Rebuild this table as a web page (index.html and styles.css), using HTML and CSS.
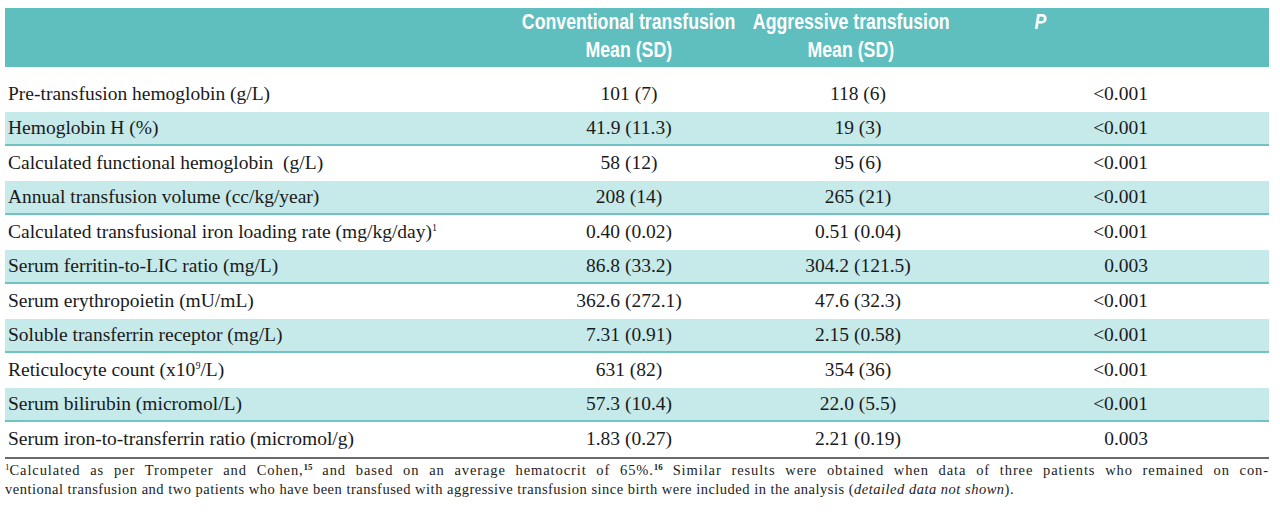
FILE: index.html
```html
<!DOCTYPE html>
<html lang="en">
<head>
<meta charset="utf-8">
<title>Table</title>
<link rel="stylesheet" href="styles.css">
</head>
<body>
<div class="page">
  <div class="head">
    <div class="hcell"></div>
    <div class="hcell"><span class="nar">Conventional transfusion</span><span class="nar">Mean (SD)</span></div>
    <div class="hcell c2"><span class="nar">Aggressive transfusion</span><span class="nar">Mean (SD)</span></div>
    <div class="hcell p"><i class="nar">P</i></div>
  </div>
  <div class="body">
    <div class="row first"><div class="lab">Pre-transfusion hemoglobin (g/L)</div><div class="v">101 (7)</div><div class="v">118 (6)</div><div class="pv">&lt;0.001</div></div>
    <div class="row alt"><div class="lab">Hemoglobin H (%)</div><div class="v">41.9 (11.3)</div><div class="v">19 (3)</div><div class="pv">&lt;0.001</div></div>
    <div class="row"><div class="lab">Calculated functional hemoglobin&nbsp; (g/L)</div><div class="v">58 (12)</div><div class="v">95 (6)</div><div class="pv">&lt;0.001</div></div>
    <div class="row alt"><div class="lab">Annual transfusion volume (cc/kg/year)</div><div class="v">208 (14)</div><div class="v">265 (21)</div><div class="pv">&lt;0.001</div></div>
    <div class="row"><div class="lab">Calculated transfusional iron loading rate (mg/kg/day)<sup>1</sup></div><div class="v">0.40 (0.02)</div><div class="v">0.51 (0.04)</div><div class="pv">&lt;0.001</div></div>
    <div class="row alt"><div class="lab">Serum ferritin-to-LIC ratio (mg/L)</div><div class="v">86.8 (33.2)</div><div class="v">304.2 (121.5)</div><div class="pv">0.003</div></div>
    <div class="row"><div class="lab">Serum erythropoietin (mU/mL)</div><div class="v">362.6 (272.1)</div><div class="v">47.6 (32.3)</div><div class="pv">&lt;0.001</div></div>
    <div class="row alt"><div class="lab">Soluble transferrin receptor (mg/L)</div><div class="v">7.31 (0.91)</div><div class="v">2.15 (0.58)</div><div class="pv">&lt;0.001</div></div>
    <div class="row"><div class="lab">Reticulocyte count (x10<sup>9</sup>/L)</div><div class="v">631 (82)</div><div class="v">354 (36)</div><div class="pv">&lt;0.001</div></div>
    <div class="row alt"><div class="lab">Serum bilirubin (micromol/L)</div><div class="v">57.3 (10.4)</div><div class="v">22.0 (5.5)</div><div class="pv">&lt;0.001</div></div>
    <div class="row"><div class="lab">Serum iron-to-transferrin ratio (micromol/g)</div><div class="v">1.83 (0.27)</div><div class="v">2.21 (0.19)</div><div class="pv">0.003</div></div>
  </div>
  <div class="note">
    <div class="l1"><sup>1</sup>Calculated as per Trompeter and Cohen,<sup class="b">15</sup> and based on an average hematocrit of 65%.<sup class="b">16</sup> Similar results were obtained when data of three patients who remained on con-</div>
    <div class="l2">ventional transfusion and two patients who have been transfused with aggressive transfusion since birth were included in the analysis (<i>detailed data not shown</i>).</div>
  </div>
</div>
</body>
</html>
```

FILE: styles.css
```css
html, body {
  margin: 0;
  padding: 0;
  background: #ffffff;
}

.page {
  padding: 8px 11px 0 5px;
  font-family: "Liberation Serif", "Times New Roman", serif;
  color: #1a1a1a;
}

.head,
.row {
  display: grid;
  grid-template-columns: 515px 218px 240px 291px;
}

.head {
  height: 59px;
  background: #5fbebe;
  color: #ffffff;
  font-family: "Liberation Sans", Arial, sans-serif;
  font-weight: bold;
  font-size: 22px;
  line-height: 28px;
  align-items: start;
}

.hcell {
  display: flex;
  flex-direction: column;
  align-items: center;
}

.nar {
  display: block;
  white-space: nowrap;
  transform: scaleX(0.805);
  transform-origin: center;
}

.hcell.c2 {
  padding-right: 14px;
}

.hcell.p {
  align-items: flex-start;
  padding-left: 55px;
}

.body {
  border-bottom: 2px solid #6a6a6a;
}

.row {
  height: 34.5px;
  box-sizing: border-box;
  align-items: center;
  font-size: 19.5px;
  line-height: 22px;
}

.row.first {
  margin-top: 10px;
}

.row.alt {
  background: #c6e9e9;
  border-bottom: 2px solid #6fc3c3;
}

.lab {
  padding-left: 3px;
  white-space: nowrap;
}

.v {
  text-align: center;
}

.pv {
  text-align: right;
  padding-right: 121px;
}

sup {
  font-size: 10px;
  line-height: 0;
  vertical-align: 7px;
}

.note {
  padding-top: 2px;
  font-size: 14.5px;
  line-height: 19px;
  letter-spacing: 0.5px;
  color: #222222;
}

.note .l1 {
  text-align: justify;
  text-align-last: justify;
  white-space: nowrap;
  letter-spacing: 0.9px;
}

.note sup {
  font-size: 9px;
  vertical-align: 5px;
  letter-spacing: 0;
}

.note sup.b {
  font-weight: bold;
}
```
